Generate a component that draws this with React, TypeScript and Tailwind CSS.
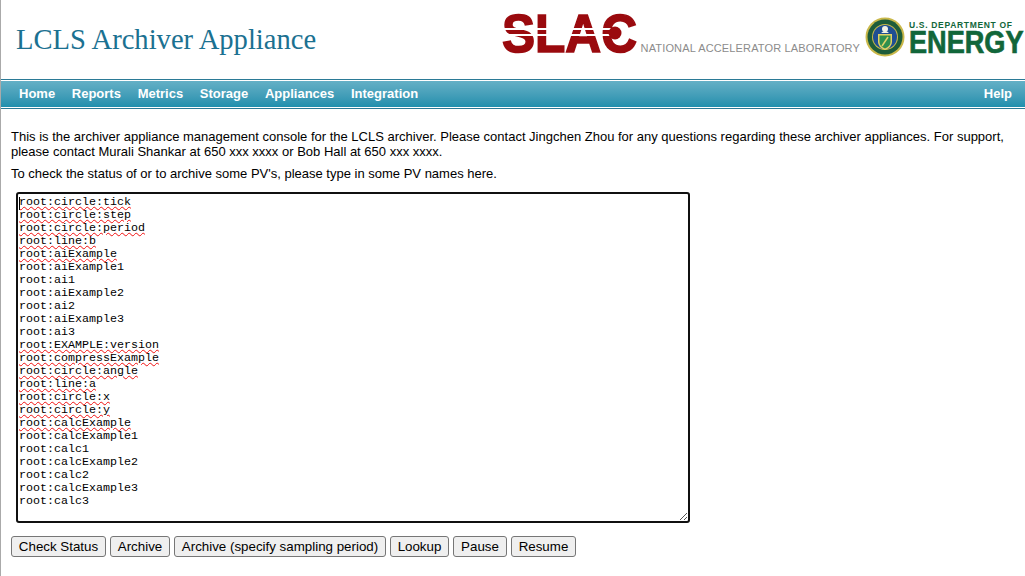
const lines: [string, boolean][] = [
  ["root:circle:tick", true],
  ["root:circle:step", true],
  ["root:circle:period", true],
  ["root:line:b", true],
  ["root:aiExample", true],
  ["root:aiExample1", false],
  ["root:ai1", false],
  ["root:aiExample2", false],
  ["root:ai2", false],
  ["root:aiExample3", false],
  ["root:ai3", false],
  ["root:EXAMPLE:version", true],
  ["root:compressExample", true],
  ["root:circle:angle", true],
  ["root:line:a", true],
  ["root:circle:x", true],
  ["root:circle:y", true],
  ["root:calcExample", true],
  ["root:calcExample1", false],
  ["root:calc1", false],
  ["root:calcExample2", false],
  ["root:calc2", false],
  ["root:calcExample3", false],
  ["root:calc3", false],
];

const navItems = ["Home", "Reports", "Metrics", "Storage", "Appliances", "Integration"];
const buttons: [string, string][] = [
  ["Check Status", "w-[95px]"],
  ["Archive", "w-[60px]"],
  ["Archive (specify sampling period)", "w-[212px]"],
  ["Lookup", "w-[59px]"],
  ["Pause", "w-[54px]"],
  ["Resume", "w-[65px]"],
];

function SlacLogo() {
  return (
    <svg width="136" height="42" viewBox="0 0 136 42" className="shrink-0 overflow-visible">
      <text
        transform="translate(0 39) scale(1.24 1.35)"
        fontFamily="Liberation Sans, sans-serif"
        fontWeight="700"
        fontSize="40"
        fill="#9a0a0e"
        stroke="#9a0a0e"
        strokeWidth="1.2"
      >
        SLAC
      </text>
      <rect x="0" y="15" width="112" height="2" fill="#fff" />
      <rect x="0" y="21" width="112" height="2" fill="#fff" />
      <circle cx="113" cy="20" r="6.5" fill="#9a0a0e" />
    </svg>
  );
}

function DoeSeal() {
  return (
    <svg width="40" height="40" viewBox="0 0 40 40" className="shrink-0">
      <circle cx="20" cy="20" r="19.5" fill="#c9b84a" />
      <circle cx="20" cy="20" r="17.5" fill="#1d5c3a" />
      <circle cx="20" cy="20" r="13" fill="#c9b84a" />
      <circle cx="20" cy="20" r="12" fill="#1f4f93" />
      <path d="M13 17 H27 V25 Q27 30 20 33 Q13 30 13 25 Z" fill="#e3d267" />
      <path d="M14.5 18.5 H25.5 V25 Q25.5 29 20 31.5 Q14.5 29 14.5 25 Z" fill="#2f8f4e" />
      <path d="M17 29 L23 20" stroke="#e3d267" strokeWidth="1.5" />
      <circle cx="20" cy="12" r="3" fill="#f2f2e6" />
      <path d="M16 16 Q20 12 24 16 Z" fill="#f2f2e6" />
    </svg>
  );
}

function EnergyWordmark() {
  return (
    <svg width="116" height="38" viewBox="0 0 116 38" className="shrink-0 overflow-visible">
      <text x="0" y="9" textLength="103" lengthAdjust="spacing" fontFamily="Liberation Sans, sans-serif" fontWeight="700" fontSize="8.5" fill="#11663a">
        U.S. DEPARTMENT OF
      </text>
      <text transform="translate(0 34) scale(1.18 1.39)" fontFamily="Liberation Sans, sans-serif" fontWeight="700" fontSize="23" fill="#11663a" stroke="#11663a" strokeWidth="0.5">
        ENERGY
      </text>
    </svg>
  );
}

export default function App() {
  return (
    <div className="min-h-[576px] overflow-hidden border-l border-[#aaaaaa] bg-white font-['Liberation_Sans',Arial,sans-serif] text-[13px] text-black">
      <header className="flex h-[79px] items-start justify-between">
        <h1 className="ml-[15px] mt-[22px] font-['Liberation_Serif',serif] text-[28.6px] font-normal leading-9 text-[#1b7191]">
          LCLS Archiver Appliance
        </h1>
        <div className="flex items-start">
          <div className="mt-[13px]">
            <SlacLogo />
          </div>
          <span className="ml-[3px] mt-[42px] whitespace-nowrap text-[11px] leading-3 tracking-[0.15px] text-[#8c8c8c]">
            NATIONAL ACCELERATOR LABORATORY
          </span>
          <div className="ml-[5px] mt-[17px]">
            <DoeSeal />
          </div>
          <div className="ml-[4px] mt-[19px]">
            <EnergyWordmark />
          </div>
        </div>
      </header>

      <nav className="border-y border-[#2b7a96] bg-white py-px">
        <div className="flex h-[26px] items-center justify-between bg-gradient-to-b from-[#64b0c6] to-[#1f8fad] pl-[18px] pr-[13px] text-[13px] font-bold text-white">
          <ul className="flex gap-[16.7px]">
            {navItems.map((item) => (
              <li key={item}>{item}</li>
            ))}
          </ul>
          <span>Help</span>
        </div>
      </nav>

      <main className="px-[10px] pt-[20px]">
        <p className="leading-[15px]">
          This is the archiver appliance management console for the LCLS archiver. Please contact Jingchen Zhou for any questions regarding these archiver appliances. For support, please contact Murali Shankar at 650 xxx xxxx or Bob Hall at 650 xxx xxxx.
        </p>
        <p className="mt-[7px] leading-[15px]">To check the status of or to archive some PV's, please type in some PV names here.</p>

        <div className="relative ml-[5px] mt-[11px] h-[331px] w-[674px] rounded-[3px] border-2 border-[#101010] pl-[1px] pt-[2px] font-['Liberation_Mono',monospace] text-[11.67px] leading-[13px]">
          <span className="absolute left-[1px] top-[3px] h-[13px] w-px bg-black" />
          {lines.map(([text, wavy]) => (
            <div key={text} className="h-[13px] whitespace-pre">
              <span className={wavy ? "underline decoration-[#f01010] decoration-wavy decoration-1 underline-offset-1" : ""}>{text}</span>
            </div>
          ))}
          <svg width="10" height="10" viewBox="0 0 10 10" className="absolute bottom-0 right-0">
            <path d="M9 2 L2 9 M9 6 L6 9" stroke="#555" strokeWidth="1" />
          </svg>
        </div>

        <div className="mt-[13px] flex gap-1">
          {buttons.map(([label, width]) => (
            <button key={label} type="button" className={`${width} h-[21px] rounded-[3px] border border-[#767676] bg-[#efefef] text-[13.33px] leading-4 text-black`}>
              {label}
            </button>
          ))}
        </div>
      </main>
    </div>
  );
}
